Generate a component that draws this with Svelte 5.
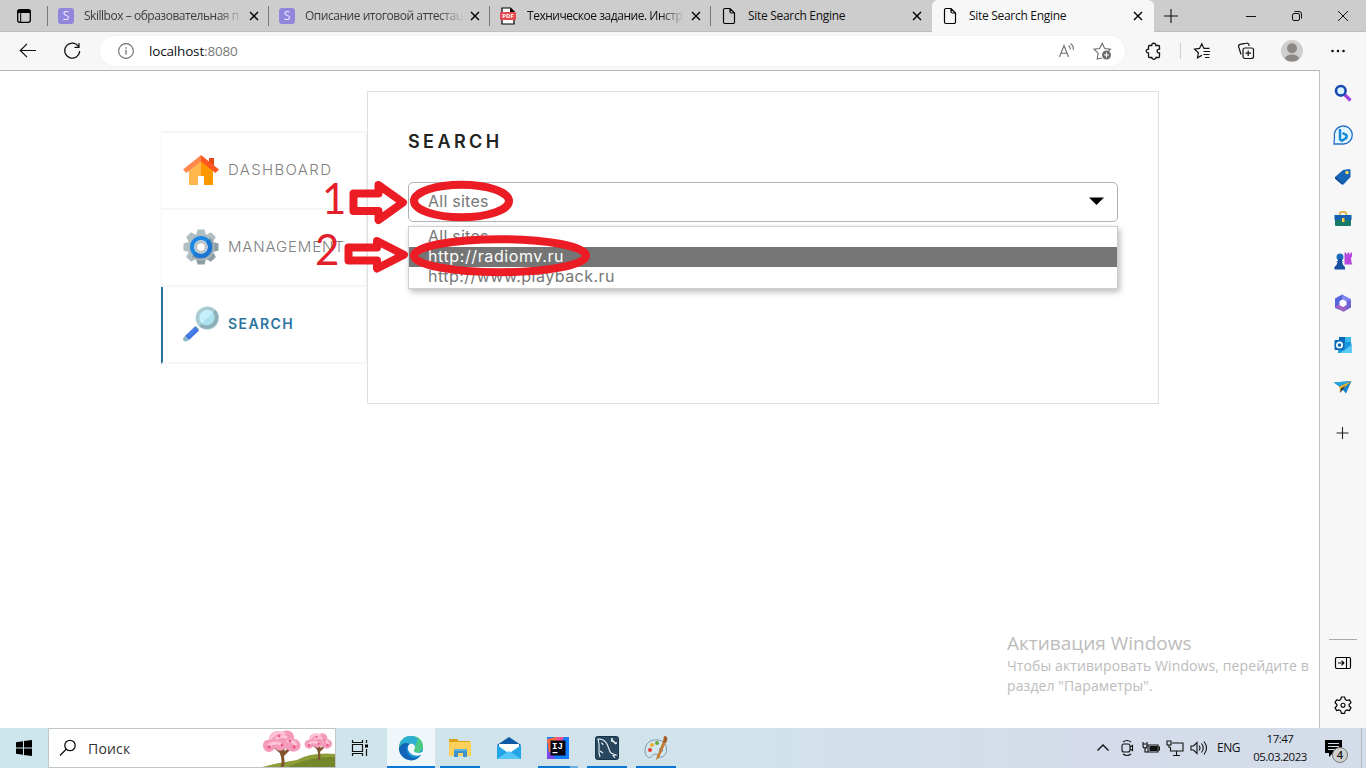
<script>
  const tabs = [
    { title: 'Skillbox – образовательная п', icon: 's', dim: true, long: true },
    { title: 'Описание итоговой аттестац', icon: 's', dim: true, long: true },
    { title: 'Техническое задание. Инстр', icon: 'pdf', long: true },
    { title: 'Site Search Engine', icon: 'page' },
    { title: 'Site Search Engine', icon: 'page', active: true }
  ];
  const options = ['All sites', 'http://radiomv.ru', 'http://www.playback.ru'];
  const teeth = [0, 45, 90, 135, 180, 225, 270, 315];
</script>

{#snippet cross()}
  <svg class="cross" width="10" height="10" viewBox="0 0 10 10"><path d="M1 1l8 8M9 1L1 9" /></svg>
{/snippet}

{#snippet tree()}
  <path d="M20 38c2-5 1-10-1-15l-7-6M20 27l8-8M21 24v-11" stroke="#80532f" stroke-width="3" fill="none" />
  <path d="M2 20c-3-5 1-10 5-9C7 4 14 0 20 3c7-4 13 1 12 7 6 0 9 8 4 11-5 4-10 0-13-2-3 4-8 3-10 0-3 5-9 5-11 1z" fill="#f49aba" />
  <path d="M8 10c4-6 9-8 15-5M6 17c5-5 10-3 13-2M25 13c4-2 7 0 9 3M14 10c3-3 8-3 11-1" stroke="#ffc4d7" stroke-width="3" fill="none" />
  <g fill="#e85b8b"><circle cx="7" cy="18" r="1.7" /><circle cx="17" cy="7" r="1.4" /><circle cx="28" cy="12" r="1.5" /><circle cx="32" cy="18" r="1.7" /><circle cx="20" cy="16" r="1.3" /></g>
{/snippet}

<div class="screen">
  <header class="tabstrip">
    <div class="tabactions">
      <svg width="16" height="16" viewBox="0 0 16 16"><rect x="1.7" y="1.7" width="12.6" height="12.6" rx="2" fill="none" stroke="#000" stroke-width="1.3" /><path d="M1.500 2h13v3h-13z" /><path d="M4.700 4v10" stroke="#000" stroke-width="1" /></svg>
    </div>
    {#each tabs as tab}
      <div class="tab" class:active={tab.active} class:dim={tab.dim} class:long={tab.long}>
        <span class="favicon">
          {#if tab.icon === 's'}
            <span class="skill">S</span>
          {:else if tab.icon === 'pdf'}
            <svg width="16" height="18" viewBox="0 0 16 18"><path d="M2 1h8.500L14 4.500V17H2z" fill="#fff" stroke="#000" stroke-width="1.200" /><path d="M10 1v4h4z" /><rect x="0" y="5" width="16" height="8" rx="1" fill="#e5484d" /><text x="8" y="11.300" text-anchor="middle" font-size="6" font-weight="700" fill="#fff">PDF</text></svg>
          {:else}
            <svg width="14" height="18" viewBox="0 0 14 18"><path d="M3 1.500h5L12.500 6v9a1.500 1.500 0 0 1-1.500 1.500H3A1.500 1.500 0 0 1 1.500 15V3A1.500 1.500 0 0 1 3 1.500zM8 1.500v3A1.500 1.500 0 0 0 9.500 6h3" fill="none" stroke="#000" stroke-width="1.200" /></svg>
          {/if}
        </span>
        <span class="title">{tab.title}</span>
        {@render cross()}
      </div>
    {/each}
    <div class="newtab"><svg width="14" height="14" viewBox="0 0 14 14"><path d="M7 0v14M0 7h14" /></svg></div>
    <div class="wincontrols">
      <svg width="46" height="32" viewBox="0 0 46 32"><path d="M18 16.500h10" /></svg>
      <svg width="46" height="32" viewBox="0 0 46 32"><rect x="18.500" y="13.500" width="7" height="7" rx="1.500" /><path d="M20.500 11.500h4.500a2.500 2.500 0 0 1 2.500 2.500v4.500" /></svg>
      <svg width="46" height="32" viewBox="0 0 46 32"><path d="M18 11l10 10M28 11L18 21" /></svg>
    </div>
  </header>

  <div class="toolbar">
    <svg width="56" height="38" viewBox="0 0 56 38"><path d="M36 18.500H20.500M27 11.800l-6.700 6.700 6.700 6.700" /></svg>
    <svg width="32" height="38" viewBox="0 0 32 38"><path d="M22.500 14.500a7.500 7.500 0 1 0 1.200 4.500M23 11v4.300h-4.500" /></svg>
    <div class="address">
      <svg width="16" height="16" viewBox="0 0 16 16" class="gray"><circle cx="8" cy="8" r="7.400" /><path d="M8 7v4.500M8 4.300v1.400" stroke-width="1.300" /></svg>
      <span class="url">localhost<i>:8080</i></span>
      <svg width="18" height="18" viewBox="0 0 18 18" class="gray read"><path d="M1.500 15L6 3.500 10.500 15M3 11.300h6M10.500 3.500c1.500 1 1.900 2.400 1.700 4M12.500 1.500c2.200 1.500 3.200 4 2.600 6.500" /></svg>
      <svg width="20" height="18" viewBox="0 0 20 18" class="gray"><path d="M9 16l-4.800 1 1-5.800L1 7.200l5.700-.7L9.200 1.300l2.500 5.200 5.700.7-2 1.900" /><circle cx="13.500" cy="13" r="4.500" fill="#6b6b6b" stroke="none" /><path d="M13.500 10.500v5M11 13h5" stroke="#fff" /></svg>
    </div>
    <div class="tools">
      <svg width="18" height="18" viewBox="0 0 18 18" class="puzzle"><path d="M4.500 3.500h2.200c-.2-3 4.300-3 4.100 0h2.700a1 1 0 0 1 1 1v2.700c-3.200-.3-3.200 4 0 3.700v3.600a1 1 0 0 1-1 1h-2.500c.2 2.300-4.400 2.300-4.200 0H4.500a1 1 0 0 1-1-1v-3.600c-3 .2-3-3.900 0-3.700V4.500a1 1 0 0 1 1-1z" stroke-width="1.300" /></svg>
      <span class="divider"></span>
      <svg width="18" height="18" viewBox="0 0 18 18" class="favs"><path d="M9 13.300l-4.500 2.500.9-5L1.500 7.200l5-.8L8.800 1.800 11 6.400h5.500M10.500 9.500h6.500M10.500 12.500h6M12 15.500h4.500" stroke-width="1.200" /></svg>
      <svg width="18" height="18" viewBox="0 0 18 18" class="coll"><rect x="6" y="6" width="10.500" height="10.500" rx="2" /><path d="M11.200 8.500v5.500M8.500 11.200H14M4 12.500L1.700 4.800a2 2 0 0 1 1.400-2.400L9.500 1.200a2 2 0 0 1 2.400 1.500l.3 1.300" stroke-width="1.200" /></svg>
      <svg width="22" height="22" viewBox="0 0 22 22" class="avatar"><circle cx="11" cy="11" r="11" fill="#d0cecd" stroke="none" /><circle cx="11" cy="8.300" r="5" fill="#8a8785" stroke="none" /><path d="M4 19c0-6 14-6 14 0a11 11 0 0 1-14 0z" fill="#8a8785" stroke="none" /></svg>
      <svg width="16" height="16" viewBox="0 0 16 16"><g fill="#111" stroke="none"><circle cx="2.500" cy="8" r="1.300" /><circle cx="8" cy="8" r="1.300" /><circle cx="13.500" cy="8" r="1.300" /></g></svg>
    </div>
  </div>

  <div class="middle">
    <main>
      <nav>
        <div class="item">
          <svg width="36" height="36" viewBox="0 -2 36 36"><path d="M6 17L18 6l12 11v14h-9v-9h-6v9H6z" fill="#ffb74d" /><path d="M18 6l12 11v14h-9v-9h-3z" fill="#ff9800" /><path d="M26 4h5v10h-5z" fill="#e64a19" /><path d="M18 1L0 15.500 3.500 19 18 7.500z" fill="#ff8a50" /><path d="M18 1l18 14.500-3.500 3.500L18 7.500z" fill="#ff5722" /></svg>
          <span>DASHBOARD</span>
        </div>
        <div class="item manage">
          <svg width="36" height="36" viewBox="0 0 36 36">
            {#each teeth as a}<path d="M14.500.5h7l2 7.500h-11z" fill={a > 50 && a < 190 ? '#8b9da5' : '#afbec3'} transform="rotate({a} 18 18)" />{/each}
            <circle cx="18" cy="18" r="13.500" fill="#afbec3" /><path d="M27.500 8.500a13.500 13.500 0 0 1-19 19z" fill="#8b9da5" />
            <circle cx="18" cy="18" r="9" fill="#cfd8dc" stroke="#1e88e5" stroke-width="4" /><path d="M24.400 11.600a9 9 0 0 1-12.800 12.800" fill="none" stroke="#1976d2" stroke-width="4" /><circle cx="18" cy="18" r="5" fill="#fff" stroke="#b9c4c9" stroke-width="2.500" />
          </svg>
          <span>MANAGEMENT</span>
        </div>
        <div class="item current">
          <svg width="36" height="36" viewBox="0 0 36 36"><path d="M13 20l3 3-3 3-3-3z" fill="#8ca5ad" /><path d="M2 30L12 20.500l4 4L6 34z" fill="#3d72dd" /><path d="M2 30l4 4c-2 2-6 2-6-1 0-1 1-2 2-3z" fill="#8cb7c8" /><path d="M5 28.500l7-7 2 2-8 8z" fill="#4a80ea" /><circle cx="24.300" cy="12" r="9.800" fill="#c5f0fc" stroke="#a9cbd4" stroke-width="3.600" /><path d="M31.200 5.100a9.800 9.800 0 0 1-13.800 13.800z" fill="#aee1ef" /><path d="M31.200 5.100a9.800 9.800 0 0 1-13.800 13.800" fill="none" stroke="#8eafb8" stroke-width="3.600" /></svg>
          <span>SEARCH</span>
        </div>
      </nav>
      <section>
        <h1>SEARCH</h1>
        <div class="select"><span>{options[0]}</span><svg width="16" height="9" viewBox="0 0 16 9"><path d="M1 .5h15L8.500 8z" /></svg></div>
        <ul>
          {#each options as option, i}<li class:chosen={i === 1}>{option}</li>{/each}
        </ul>
      </section>

      <svg class="marks" width="320" height="140" viewBox="300 150 320 140">
        <g fill="none" stroke="#ec1c24" stroke-width="8" stroke-linejoin="round">
          <path d="M353.500 193.500H378.500V185L403 202.500 378.500 220V211H353.500z" />
          <path d="M348.500 247.500H377V241L404 254.700 377 268.500V260.500H348.500z" />
          <ellipse cx="461.500" cy="201" rx="47.500" ry="16.200" />
          <ellipse cx="500" cy="255.700" rx="86" ry="16.500" />
        </g>
        <text x="322" y="214">1</text><text x="315" y="265">2</text>
      </svg>
      <div class="activation"><h2>Активация Windows</h2><p>Чтобы активировать Windows, перейдите в<br />раздел "Параметры".</p></div>
    </main>

    <aside>
      <svg viewBox="0 0 20 20"><path d="M11.500 11.500l6 6" stroke="#a044dc" stroke-width="3.200" /><circle cx="7.800" cy="7.800" r="4.800" fill="#d9f3ff" stroke="#174bb2" stroke-width="2.600" /></svg>
      <svg viewBox="0 0 20 20"><path d="M1 19l.5-7A9 9 0 1 1 10 19z" fill="#e3f6ff" stroke="#276fc4" stroke-width="1.300" /><path d="M7 4v10.500l2 1.200 4.500-3v-2.500L9.500 8" fill="none" stroke="#1588d7" stroke-width="2.500" stroke-linejoin="round" /></svg>
      <svg viewBox="0 0 20 20"><path d="M2 10l8-7 6.500-1 1 1v7l-7 7.500H9l-7-6z" fill="#1765b5" /><path d="M2 10l2 1 6 6-1 .5-7-6z" fill="#0b408b" /><circle cx="14" cy="5.500" r="1.700" fill="#ffd75a" /></svg>
      <svg viewBox="0 0 20 20"><path d="M7 6V4q0-1 1-1h4q1 0 1 1v2" fill="none" stroke="#d9a52b" stroke-width="1.500" /><path d="M2 9h16v7q0 1-1 1H3q-1 0-1-1z" fill="#167b67" /><path d="M1.500 6h17v5h-17z" fill="#1560b0" /><path d="M9 9h2.500v4H9z" fill="#ffcb42" /></svg>
      <svg viewBox="0 0 20 20"><path d="M11.500 1.500h1.700v1.500h1.300V1.500h1.700v1.500h1.300V1.500h1.500v4l-1 1 .5 5 1 2h-8z" fill="#b648de" /><circle cx="7" cy="6" r="3.500" fill="#1b69bd" /><path d="M5 8h4v2h1.500l-1.500 1 1 3 2 2v2.500H1.500V16l2-2 1-3-1.500-1h2z" fill="#174fa1" /></svg>
      <svg viewBox="0 0 20 20"><path d="M9 1.500L2 5.500v9.500l5 2V8l6-3.500z" fill="#5567df" /><path d="M9 1.500L18 6v6.500L13 9.500 9 6.500z" fill="#7f86ed" /><path d="M18 7v7.500L11 18.500l-6.500-3.500L13 11.500V8z" fill="#6f63d6" /><path d="M2 13.500l5-2.500 6 3 1 2.500-4 2.200z" fill="#a064c4" /><path d="M10 6.500l3.500 2v3.500L10 14l-3.500-2V8.500z" fill="#fff" /></svg>
      <svg viewBox="0 0 20 20"><path d="M6 2h12v6l.5 1v9H5z" fill="#1598dd" /><path d="M6 2h6v5H6z" fill="#0868b8" /><path d="M12 2h6v5h-6z" fill="#35b9ef" /><path d="M7 18l11.500-8v8z" fill="#56c9f4" /><rect x="1.500" y="5" width="10" height="10" rx="1" fill="#086bb8" /><circle cx="6.500" cy="10" r="2.700" fill="none" stroke="#fff" stroke-width="1.700" /></svg>
      <svg viewBox="0 0 20 20"><path d="M1 5.500L18.500 4 13 16.500l-3.500-4L7 15V10z" fill="#1681c4" /><path d="M1 5.500L18.500 4 7 10z" fill="#26a2dc" /><path d="M18.500 4L6.500 9.500 7 16l2-3.500z" fill="#f2ac2a" /><path d="M7 16l1-4.500L12 9 9.500 13z" fill="#1c354b" /></svg>
      <svg viewBox="0 0 20 20" class="add"><path d="M9.500 4v12M3.500 10h12" stroke="#222" stroke-width="1.100" /></svg>
      <div class="asidebottom">
        <svg viewBox="0 0 20 20"><rect x="2.500" y="4.500" width="15" height="11" rx="1.200" fill="none" stroke="#000" stroke-width="1.200" /><path d="M13.500 4.500v11M5 10h6M8.500 7.700L10.900 10l-2.400 2.300" fill="none" stroke="#000" stroke-width="1.100" /></svg>
        <svg viewBox="0 0 20 20"><path d="M8.400 2h3.200l.7 2.600 1.600.9 2.500-.7L18 7.600 16.100 9.500v1.500l1.900 1.800-1.600 2.800-2.500-.7-1.600.9-.7 2.500H8.400l-.7-2.500-1.600-.9-2.500.7L2 12.800 3.900 11V9.500L2 7.600l1.600-2.800 2.500.7 1.600-.9z" fill="none" stroke="#000" stroke-width="1.200" stroke-linejoin="round" /><circle cx="10" cy="10.200" r="2" fill="none" stroke="#000" stroke-width="1.100" /></svg>
      </div>
    </aside>
  </div>

  <footer>
    <div class="start"><svg width="16" height="16" viewBox="0 0 16 16"><path d="M0 2.300L7 1.200v6.300H0zM8 1l8-1v7.500H8zM0 8.500h7v6.300L0 13.800zM8 8.500h8V16l-8-1z" /></svg></div>
    <div class="searchbox">
      <svg width="18" height="18" viewBox="0 0 18 18"><circle cx="11" cy="6.500" r="5.200" fill="none" stroke="#111" stroke-width="1.300" /><path d="M7.200 10.300L1 16.500" stroke="#111" stroke-width="1.300" /></svg>
      <span>Поиск</span>
      <svg class="sakura" width="73" height="38" viewBox="0 0 73 38"><path d="M0 38Q14 34 35 31 50 23 73 25V38z" fill="#8f9d39" /><path d="M26 38Q48 27 73 28V38z" fill="#75872b" /><g>{@render tree()}</g><g transform="translate(42 3) scale(.73)">{@render tree()}</g></svg>
    </div>
    <div class="taskview"><svg width="18" height="18" viewBox="0 0 18 18"><path d="M1.500 1v2.500h10V1M1.500 17v-2.500h10V17M1.500 5.500h10v7h-10zM15.500 1v3M15.500 10v7" fill="none" stroke="#111" stroke-width="1.200" /><path d="M14 5.500h3v3h-3z" /></svg></div>
    <div class="app focus"><svg width="26" height="26" viewBox="0 0 26 26"><circle cx="13" cy="13" r="12" fill="#138fd3" /><path d="M1 13C1 4 8 1 13 1c8 0 12 5 12 10 0 6-6 8-10 6 3-3 1-8-4-8-5 0-8 2-10 4z" fill="#4ccb86" /><path d="M1.500 10C4 2 9 1 13 1c3 0 5 1 7 2.500L17 12C14 8 7 7 1.500 10z" fill="#2dafd3" /><path d="M1 13C3 8 8 7 12 9c-6 3-4 12 4 14 3 0 5-1 7-3-4 7-14 7-19 1-2-2-3-5-3-8z" fill="#1265b8" /><path d="M12 9c3-1 7 2 4 6-1 2 3 4 8 2 2-1 1 1 0 2-4 3-9 2-12-1-3-3-3-7 0-9z" fill="#f0f8fb" /></svg></div>
    <div class="app run"><svg width="24" height="24" viewBox="0 0 24 24"><path d="M1 4q0-1 1-1h7l2 2h11v5H1z" fill="#dda017" /><path d="M1 6h21q1 0 1 1v13H1z" fill="#ffd05a" /><path d="M6 13h13v8h-4v-4h-5v4H6z" fill="#3c93ce" /><path d="M6 13h13v2H6z" fill="#57b5e5" /></svg></div>
    <div class="app"><svg width="26" height="26" viewBox="0 0 26 26"><path d="M1 10L13 2l12 8-12 8z" fill="#0c5aa6" /><path d="M3 9h20v6l-10 5-10-5z" fill="#fff" /><path d="M1 10l12 8.500L25 10v14H1z" fill="#24a5e8" /><path d="M1 24l12-8 12 8z" fill="#54c7f5" /></svg></div>
    <div class="app run multi"><svg width="22" height="22" viewBox="0 0 22 22"><path d="M0 0h22v22H0z" fill="#147dff" /><path d="M0 2L9 0h5L2 17z" fill="#fb6b3c" /><path d="M9 0h8l-5 10z" fill="#f64e91" /><path d="M0 13l9 9H0z" fill="#7c46e8" /><path d="M3.500 3.500h15v15h-15z" fill="#080511" /><text x="5" y="12" font-family="Liberation Mono, monospace" font-size="9" font-weight="700" fill="#fff">IJ</text><path d="M5.500 15h5v1.200h-5z" fill="#fff" /></svg></div>
    <div class="app run"><svg width="24" height="24" viewBox="0 0 24 24"><rect x=".5" y=".5" width="23" height="23" rx="2" fill="#29485f" stroke="#173348" /><path d="M5 21l-1-4V8L3 3c4 0 7 1 9 5 2 4 2 7 4 9l5 2-3 .5 2 2.500M6 7q2 0 2 2M5 15l3 2" fill="none" stroke="#e9f3f7" stroke-width="1.100" /><path d="M17 4l4 4M17 2v3h-1M22 7h-2" fill="none" stroke="#e9f3f7" stroke-width="1.600" /></svg></div>
    <div class="app run"><svg width="24" height="26" viewBox="0 0 24 26"><path d="M1 16C1 8 7 4 14 5c10 1 11 14 4 17-4 2-4-4-7-3-5 2-4 5-7 3-2-1-3-3-3-6z" fill="#d4e6ee" stroke="#7898aa" /><circle cx="6" cy="15" r="2" fill="#e33b31" /><circle cx="8" cy="10" r="2" fill="#e6b22d" /><circle cx="13" cy="8" r="2" fill="#67a833" /><circle cx="17" cy="15" r="2" fill="#348dd1" /><path d="M19 6l3 1-7 16-3 2 1-4z" fill="#c47e35" /><path d="M20 1c4 0 4 3 2 7l-3-1z" fill="#a45d2c" /></svg></div>
    <div class="tray">
      <svg viewBox="0 0 18 18"><path d="M3.500 11.500L9 6l5.500 5.500" stroke-width="1.400" /></svg>
      <svg viewBox="0 0 18 18"><rect x="4" y="5" width="8" height="8" rx="2" /><path d="M12 8l2.500-1.500v5L12 10M5 3q4-3 8 0M5 15q4 3 8 0" /></svg>
      <svg viewBox="0 0 18 18"><path d="M6 6h10v7H6zM16 8h1.500v3H16z" /><path d="M8 7.500h7v4H8z" fill="#111" /><path d="M1 3v4q0 2 2 2t2-2V3M.5 5h5M3 9v4h3" /></svg>
      <svg viewBox="0 0 18 18"><path d="M6 4h11v8H4.500V8M10.500 12v4M7 16.500h7M1 2h4v4H1zM3 6v3" /></svg>
      <svg viewBox="0 0 18 18"><path d="M1 7h2.500L7 3.500v11L3.500 11H1zM9 6.500q2 2.500 0 5M11.500 4.500q3.500 4.500 0 9M14 2.500q5 6.500 0 13" /></svg>
    </div>
    <div class="lang">ENG</div>
    <div class="clock"><span>17:47</span><span>05.03.2023</span></div>
    <div class="notice"><svg width="17" height="17" viewBox="0 0 17 17"><path d="M0 0h17v13H8l-4 4v-4H0z" /><path d="M3 3.500h11M3 6.500h11M3 9.500h7" stroke="#d4dbe8" stroke-width="1.200" /></svg><span>4</span></div>
    <div class="peek"></div>
  </footer>
</div>

<style>
  :global(body) { margin: 0; overflow: hidden; }
  * { box-sizing: border-box; }
  .screen { width: 1366px; height: 768px; display: flex; flex-direction: column; background: #fff; font-family: 'Open Sans', 'Noto Sans', sans-serif; color: #111; }
  svg { flex: none; display: block; }

  .tabstrip { height: 32px; flex: none; display: flex; background: #cdcdcd; border-bottom: 1px solid #bebebe; }
  .tabactions { width: 47px; display: flex; align-items: center; justify-content: center; flex: none; }
  .tab { width: 221px; flex: none; display: flex; align-items: center; position: relative; padding: 0 9px 0 11px; }
  .tab::before { content: ''; position: absolute; left: 0; top: 6px; height: 20px; width: 1px; background: #777; }
  .favicon { width: 16px; display: flex; justify-content: center; flex: none; }
  .skill { width: 16px; height: 16px; border-radius: 3px; background: #9286dc; color: #e9e5ff; font-size: 12px; line-height: 16px; text-align: center; }
  .title { margin-left: 11px; width: 158px; flex: none; white-space: nowrap; font-size: 12px; letter-spacing: -.3px; line-height: 20px; }
  .long .title { letter-spacing: -.47px; mask-image: linear-gradient(90deg, #000 84%, transparent); }
  .dim .title { color: #3c3c3c; }
  .dim .title { margin-left: 10px; width: 159px; }
  .cross { margin-left: 6px; stroke: #000; stroke-width: 1.400; }
  .tab.active { height: 32px; width: 222px; margin-left: 1px; padding-left: 10px; background: #f7f7f7; border-radius: 6px 6px 0 0; }
  .tab.active::before { display: none; }
  .newtab { width: 34px; display: flex; align-items: center; justify-content: center; stroke: #111; stroke-width: 1.1; }
  .wincontrols { margin-left: auto; display: flex; fill: none; stroke: #111; stroke-width: 1; }

  .toolbar { height: 38px; flex: none; background: #f7f7f7; display: flex; align-items: center; fill: none; stroke: #111; stroke-width: 1.2; }
  .address { margin-left: 12px; width: 1025px; height: 30px; border-radius: 15px; background: #fff; display: flex; align-items: center; padding: 0 12px 0 18px; box-shadow: 0 0 3px #ececec; flex: none; }
  .gray { stroke: #6b6b6b; stroke-width: 1.1; }
  .url { margin-left: 15px; font-size: 13.5px; letter-spacing: -.17px; line-height: 20px; }
  .url i { font-style: normal; color: #777; }
  .read { margin-left: auto; margin-right: 17px; }
  .tools { display: flex; align-items: center; flex: 1; }
  .puzzle { margin-left: 20px; }
  .divider { width: 1px; height: 16px; background: #cfcfcf; margin-left: 17px; }
  .favs { margin-left: 12px; }
  .coll { margin-left: 26px; }
  .avatar { margin: 0 27px 0 26px; }

  .middle { height: 658px; display: flex; flex: none; }
  main { width: 1319px; border-top: 1px solid #b5b5b5; position: relative; display: flex; align-items: flex-start; padding: 20px 0 0 161px; font-family: Inter, sans-serif; }
  nav { width: 206px; margin-top: 40px; border: 2px solid #f6f6f6; border-width: 2px 2px 0 1px; }
  .item { height: 77px; border-bottom: 2px solid #f6f6f6; display: flex; align-items: center; padding: 0 0 1px 21px; gap: 9px; font-size: 15px; font-weight: 300; color: #808080; letter-spacing: 1.35px; white-space: nowrap; }
  .item span { padding-bottom: 2px; }
  .item.manage { letter-spacing: .85px; }
  .item.current { border-left: 2px solid #2c74a0; margin-left: -1px; padding-left: 20px; font-weight: 600; color: #2c74a0; font-size: 14px; letter-spacing: 1.4px; }
  section { width: 792px; height: 313px; border: 1px solid #dfdfdf; padding: 39px 40px; }
  h1 { margin: 0; font-size: 18px; line-height: 22px; font-weight: 600; letter-spacing: 3.4px; color: #222; }
  .select { margin-top: 29px; width: 710px; height: 40px; border: 1px solid #b2b2b2; border-radius: 5px; display: flex; justify-content: space-between; align-items: center; padding: 0 13px 2px 19px; font-size: 16px; letter-spacing: .25px; color: #777; }
  ul { list-style: none; width: 710px; margin: 4px 0 0; padding: 0; border: 1px solid #cfcfcf; box-shadow: 2px 3px 6px #0004; background: #fff; }
  li { height: 20px; line-height: 19px; padding-left: 19px; font-size: 16px; color: #777; letter-spacing: .25px; }
  li.chosen { background: #757575; color: #fff; letter-spacing: .6px; }
  li:last-child { height: 21px; letter-spacing: .47px; }
  .marks { position: absolute; left: 300px; top: 79px; }
  .marks text { font: 42px Lato, sans-serif; fill: #e2202b; }
  .activation { position: absolute; left: 1007px; top: 560px; color: #bcbcbc; font-family: 'Open Sans', sans-serif; white-space: nowrap; }
  .activation h2 { margin: 0; font-size: 19px; line-height: 25px; font-weight: 400; }
  .activation p { margin: 0; font-size: 14px; line-height: 20px; letter-spacing: .1px; }

  aside { width: 47px; background: #f7f7f7; border-left: 1px solid #bebebe; display: flex; flex-direction: column; align-items: center; gap: 22px; padding-top: 13px; }
  aside svg { width: 20px; height: 20px; }
  aside .add { margin-top: 4px; }
  .asidebottom { margin-top: auto; border-top: 1px solid #aaa; width: 28px; display: flex; flex-direction: column; align-items: center; gap: 22px; padding: 13px 0; }

  footer { height: 40px; flex: none; display: flex; background: linear-gradient(90deg, #cde5ed, #d1e2ea 55%, #d5dbea 80%, #d3dce9); }
  .start { width: 48px; display: flex; align-items: center; justify-content: center; }
  .searchbox { width: 288px; border: 1px solid #bdc6c9; background: #fff; display: flex; align-items: center; padding-left: 10px; gap: 11px; font-size: 14px; letter-spacing: .2px; color: #333; }
  .sakura { margin-left: auto; }
  .taskview { width: 48px; display: flex; align-items: center; justify-content: center; margin-right: 3px; }
  .app { width: 49px; display: flex; align-items: center; justify-content: center; position: relative; padding-right: 2px; }
  .app.focus { width: 48px; margin-right: 1px; background: #eff7fa; border-bottom: 2px solid #0878d4; padding: 2px 0 0; }
  .app.run::after { content: ''; position: absolute; left: 4px; bottom: 0; width: 40px; height: 2px; background: #0878d4; }
  .app.multi::after { background: linear-gradient(90deg, #0878d4 32px, #6aaee3 32px); }
  .tray { margin-left: auto; display: flex; align-items: center; gap: 6px; fill: none; stroke: #111; stroke-width: 1.1; }
  .tray svg { width: 18px; height: 18px; }
  .lang { width: 30px; margin-left: 9px; font-size: 12px; line-height: 40px; letter-spacing: -.5px; }
  .clock { width: 66px; display: flex; flex-direction: column; align-items: center; font-size: 11.5px; line-height: 18px; letter-spacing: -.5px; padding-top: 2px; }
  .notice { width: 48px; position: relative; padding: 12px 0 0 12px; }
  .notice span { position: absolute; left: 19px; top: 19px; width: 16px; height: 16px; border-radius: 50%; background: #d0d0d0; border: 1px solid #777; text-align: center; font-size: 11px; line-height: 14px; font-weight: 600; }
  .peek { width: 5px; border-left: 1px solid #aeb8c4; }
</style>
